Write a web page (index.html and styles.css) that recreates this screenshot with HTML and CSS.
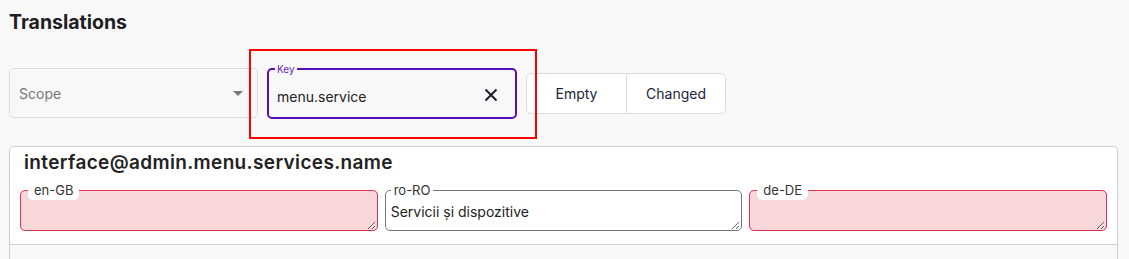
FILE: index.html
```html
<!DOCTYPE html>
<html lang="en">
<head>
  <meta charset="UTF-8" />
  <meta name="viewport" content="width=device-width, initial-scale=1.0" />
  <title>Translations</title>
  <link rel="stylesheet" href="styles.css">
</head>
<body>
  <h1 class="page-title">Translations</h1>

  <div class="filters">
    <div class="scope-select">
      <span>Scope</span>
      <span class="caret"></span>
    </div>

    <div class="key-wrap">
      <fieldset class="key-field">
        <legend>Key</legend>
        <input type="text" value="menu.service" />
        <button class="clear-btn" title="Clear">
          <svg width="14" height="14" viewBox="0 0 14 14">
            <path d="M1.5 1.5 L12.5 12.5 M12.5 1.5 L1.5 12.5" stroke="#1d1d2b" stroke-width="2" fill="none" />
          </svg>
        </button>
      </fieldset>
    </div>

    <div class="toggle-group">
      <button>Empty</button>
      <button>Changed</button>
    </div>
  </div>

  <div class="card">
    <div class="entry">
      <h2 class="entry-key">interface@admin.menu.services.name</h2>
      <div class="locales">
        <fieldset class="locale invalid">
          <legend>en-GB</legend>
          <textarea></textarea>
        </fieldset>
        <fieldset class="locale">
          <legend>ro-RO</legend>
          <textarea>Servicii și dispozitive</textarea>
        </fieldset>
        <fieldset class="locale invalid">
          <legend>de-DE</legend>
          <textarea></textarea>
        </fieldset>
      </div>
    </div>
    <div class="entry-empty"></div>
  </div>
</body>
</html>
```

FILE: styles.css
```css
body {
  font-family: Inter, "Noto Sans", sans-serif;
  background-color: #f8f8f8;
  color: #222;
  margin: 0;
  padding: 10px 11px 0 9px;
}

.page-title {
  font-size: 19.5px;
  font-weight: 700;
  line-height: 24px;
  margin: 0 0 29px;
  color: #1e1e24;
}

.filters {
  display: flex;
  align-items: flex-start;
  gap: 9px;
}

.scope-select {
  box-sizing: border-box;
  width: 249px;
  height: 50px;
  margin-top: 5px;
  border: 1px solid #dcdcdc;
  border-radius: 5px;
  display: flex;
  align-items: center;
  justify-content: space-between;
  padding: 0 14px 0 9px;
  font-size: 14px;
  color: #777;
}

.caret {
  width: 0;
  height: 0;
  border-left: 5px solid transparent;
  border-right: 5px solid transparent;
  border-top: 5px solid #777;
}

.key-wrap {
  position: relative;
}

/* annotation frame around the key filter */
.key-wrap::after {
  content: "";
  position: absolute;
  left: -18px;
  right: -20px;
  top: -14px;
  bottom: -20px;
  border: 2px solid #f00;
  pointer-events: none;
}

.key-field {
  box-sizing: border-box;
  width: 250px;
  margin: 0;
  padding: 0 17px 0 6px;
  border: 2px solid #5a0db5;
  border-radius: 5px;
  display: flex;
  align-items: center;
  min-width: 0;
}

.key-field legend {
  font-size: 10px;
  line-height: 12px;
  color: #6a1fc4;
  padding: 0 2px;
}

.key-field input {
  flex: 1;
  min-width: 0;
  height: 42px;
  border: none;
  outline: none;
  background: transparent;
  font-family: inherit;
  font-size: 14px;
  color: #222;
  padding: 0 0 0 2px;
}

.clear-btn {
  border: none;
  background: none;
  padding: 0;
  width: 14px;
  height: 14px;
  cursor: pointer;
  margin-top: -2px;
}

.toggle-group {
  display: flex;
  margin-top: 10px;
  background: #fff;
  border: 1px solid #dcdcdc;
  border-radius: 5px;
  overflow: hidden;
}

.toggle-group button {
  width: 99px;
  height: 39px;
  border: none;
  background: none;
  font-family: inherit;
  font-size: 14px;
  color: #23233a;
  cursor: pointer;
}

.toggle-group button + button {
  border-left: 1px solid #dcdcdc;
}

.card {
  margin-top: 27px;
  background: #fff;
  border: 1px solid #cfcfcf;
  border-bottom: none;
  border-radius: 5px 5px 0 0;
}

.entry {
  padding: 5px 10px 13px;
  border-bottom: 1px solid #cfcfcf;
}

.entry-key {
  font-size: 19px;
  font-weight: 600;
  line-height: 22px;
  letter-spacing: 0.35px;
  margin: 0 0 7px 4px;
  color: #222;
}

.locales {
  display: flex;
  gap: 7px;
  align-items: flex-start;
}

.locale {
  flex: 1;
  min-width: 0;
  margin: 0;
  padding: 0 1px 0 5px;
  border: 1px solid #777;
  border-radius: 5px;
  display: flex;
}

.locale legend {
  font-size: 13px;
  line-height: 15px;
  padding: 2px 3px;
  color: #333;
}

.locale.invalid {
  background: #f8d7da;
  border-color: #dc3550;
}

.locale.invalid legend {
  background: #fff;
  border-radius: 5px;
  padding: 2px 6px;
  margin-left: 2px;
}

.locale textarea {
  flex: 1;
  height: 30px;
  box-sizing: border-box;
  border: none;
  outline: none;
  background: transparent;
  resize: vertical;
  font-family: inherit;
  font-size: 14px;
  line-height: 17px;
  color: #222;
  padding: 3px 0 0;
}

.entry-empty {
  height: 40px;
  background: #f8f8f8;
}
```
